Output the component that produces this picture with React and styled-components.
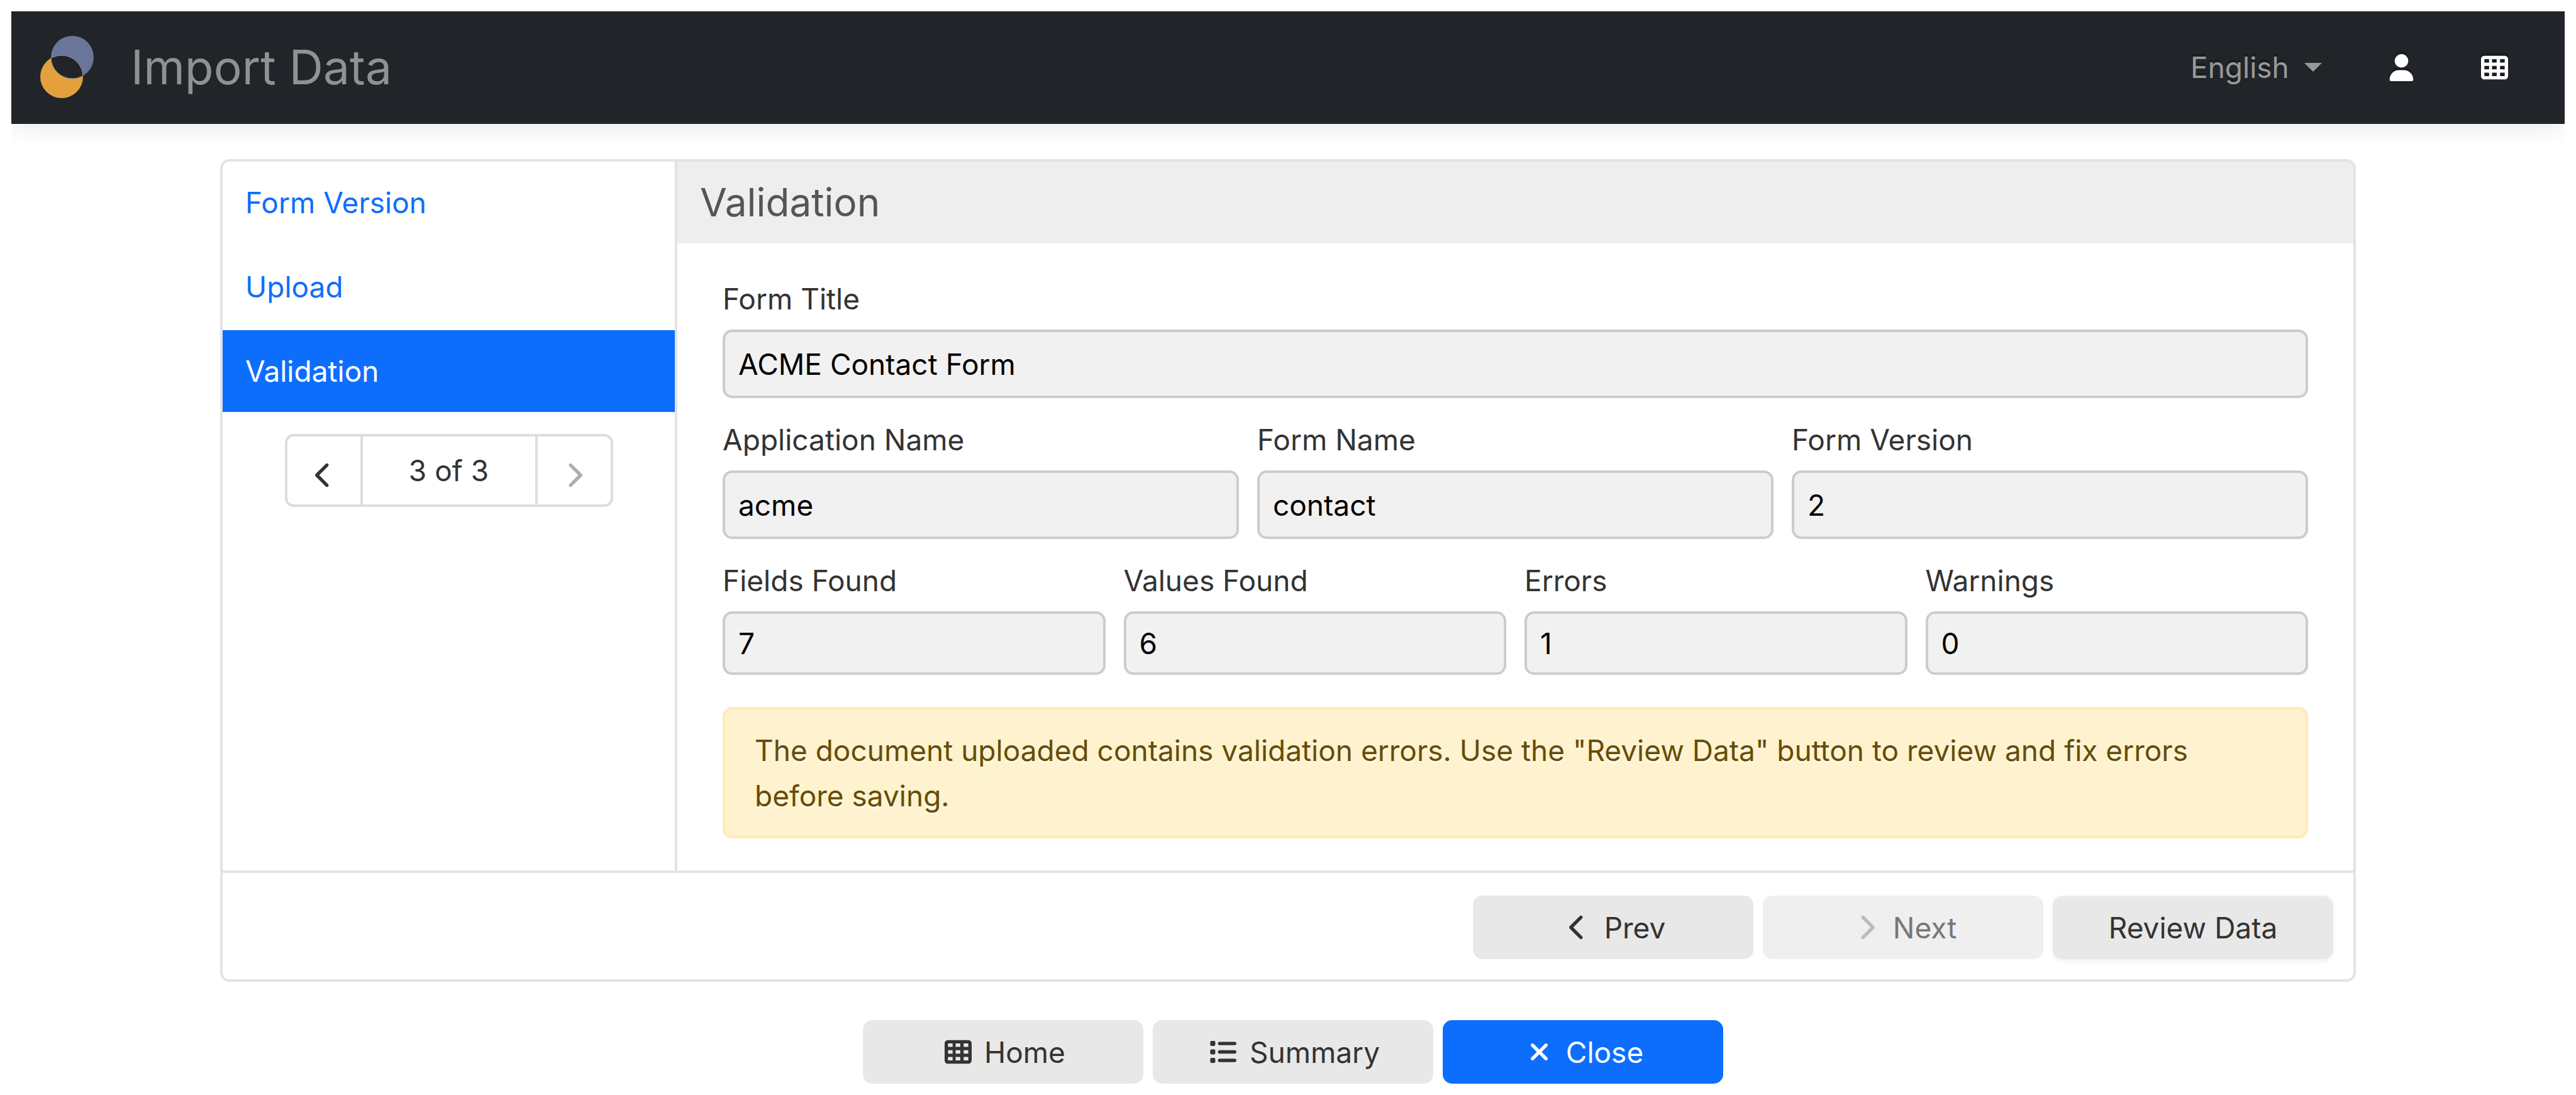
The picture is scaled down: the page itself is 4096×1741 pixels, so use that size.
import React from "react";
import styled, { createGlobalStyle, css } from "styled-components";
import {
  FaChevronLeft,
  FaChevronRight,
  FaList,
  FaTableCells,
  FaUser,
  FaXmark,
} from "react-icons/fa6";

const color = {
  nav: "#212529",
  muted: "#999",
  text: "#333",
  primary: "#0d6efd",
  line: "#e3e3e3",
  button: "#e8e8e8",
};

const GlobalStyle = createGlobalStyle`
  *, *::before, *::after { box-sizing: border-box; }
  body {
    margin: 0;
    background: #fff;
    color: ${color.text};
    font-family: Inter, "Liberation Sans", sans-serif;
    font-size: 46px;
    line-height: 72px;
  }
  button, input, select { font: inherit; }
`;

const Page = styled.div`
  padding: 18px;
`;

const Navbar = styled.header`
  display: flex;
  align-items: center;
  justify-content: space-between;
  height: 179px;
  padding: 0 90px 0 45px;
  background: ${color.nav};
  border-bottom: 1px solid #1a1d20;
  box-shadow: 0 4px 36px rgba(0, 0, 0, 0.1);
  clip-path: inset(0 0 -60px 0);
`;

const Brand = styled.a`
  display: flex;
  align-items: center;
  gap: 57px;
  color: #909193;
  font-size: 75px;
  line-height: 92px;
  text-decoration: none;
`;

const Logo = styled.svg`
  display: block;
  width: 88px;
  height: 102px;
`;

const NavTools = styled.nav`
  display: flex;
  align-items: center;
  text-shadow: 0 -4px 0 rgba(0, 0, 0, 0.25);
`;

const Language = styled.label`
  display: flex;
  align-items: center;
  gap: 24px;
  margin-right: 105px;
  color: ${color.muted};
`;

const LanguageSelect = styled.select`
  appearance: none;
  padding: 0;
  border: 0;
  background: transparent;
  color: inherit;
  text-shadow: inherit;
  line-height: 72px;
`;

const Caret = styled.span`
  border: 14px solid transparent;
  border-top-color: currentColor;
  border-bottom: 0;
`;

const NavButton = styled.button`
  display: flex;
  padding: 0;
  border: 0;
  background: transparent;
  color: #fff;
  font-size: 43px;

  & + & {
    margin-left: 105px;
  }

  svg {
    width: auto;
    height: 43px;
    filter: drop-shadow(0 -4px 0 rgba(0, 0, 0, 0.25));
  }
`;

const Main = styled.main`
  margin-top: 56px;
`;

const Card = styled.section`
  display: grid;
  grid-template-columns: 723px 1fr;
  max-width: 3396px;
  margin: 0 auto;
  border: 4px solid ${color.line};
  border-radius: 15px;
  overflow: hidden;
`;

const Sidebar = styled.aside`
  display: flex;
  flex-direction: column;
  border-right: 4px solid ${color.line};
`;

const Steps = styled.nav`
  display: flex;
  flex-direction: column;
  gap: 4px;
`;

const Step = styled.a`
  padding: 29px 36px;
  color: ${(p) => (p.$active ? "#fff" : color.primary)};
  background: ${(p) => (p.$active ? color.primary : "transparent")};
  text-decoration: none;
`;

const Pager = styled.div`
  display: grid;
  grid-template-columns: 116px 1fr 116px;
  width: 522px;
  height: 116px;
  margin: 35px auto 0;
  border: 4px solid #ddd;
  border-radius: 14px;
`;

const PagerButton = styled.button`
  display: flex;
  align-items: center;
  justify-content: center;
  padding: 14px 0 0;
  border: 0;
  background: transparent;
  color: ${color.text};
  font-size: 43px;

  &:disabled {
    color: #adadad;
  }
`;

const PagerText = styled.span`
  display: flex;
  align-items: center;
  justify-content: center;
  border: solid #ddd;
  border-width: 0 4px;
`;

const Panel = styled.div`
  min-width: 0;
`;

const PanelTitle = styled.h2`
  margin: 0;
  padding: 20px 36px;
  background: #eee;
  color: #555;
  font-size: 62px;
  font-weight: 400;
  line-height: 90px;
`;

const Form = styled.form`
  display: flex;
  flex-direction: column;
  gap: 30px;
  padding: 52px 72px 51px;
`;

const FieldRow = styled.div`
  display: grid;
  grid-template-columns: repeat(${(p) => p.$columns}, 1fr);
  gap: 29px;
`;

const FieldBox = styled.div`
  display: flex;
  flex-direction: column;
  gap: 13px;
  min-width: 0;
`;

const Input = styled.input`
  width: 100%;
  height: ${(p) => (p.$compact ? "101px" : "109px")};
  padding: 0 21px;
  border: 4px solid #ccc;
  border-radius: 15px;
  background: #f1f1f1;
  color: #000;
  outline: 0;
`;

const Alert = styled.p`
  margin: 21px 0 0;
  padding: 29px 47px 28px;
  border: 4px solid #ffeab3;
  border-radius: 15px;
  background: #fff2cf;
  color: #664d03;
  text-shadow: 0 4px 0 rgba(255, 255, 255, 0.5);
`;

const CardFooter = styled.footer`
  grid-column: 1 / -1;
  display: flex;
  justify-content: flex-end;
  gap: 15px;
  padding: 36px 32px 32px;
  border-top: 4px solid ${color.line};
`;

const Actions = styled.div`
  display: flex;
  justify-content: center;
  gap: 15px;
  margin-top: 61px;
  padding-left: 16px;
`;

const Button = styled.button`
  display: flex;
  align-items: center;
  justify-content: center;
  gap: 15px;
  width: 446px;
  height: 101px;
  padding: 0;
  border: 0;
  border-radius: 15px;
  background: ${(p) => (p.$primary ? color.primary : color.button)};
  color: ${(p) => (p.$primary ? "#fff" : color.text)};

  ${(p) =>
    p.$raised &&
    css`
      box-shadow: inset 0 4px 0 rgba(255, 255, 255, 0.2),
        0 4px 7px rgba(0, 0, 0, 0.05);
    `}

  &:disabled {
    background: #efefef;
    color: #777;
  }

  &:disabled svg {
    color: #bbb;
  }
`;

const IconSlot = styled.span`
  display: flex;
  justify-content: center;
  width: 54px;
  font-size: 43px;
`;

function Field({ id, label, value, compact }) {
  return (
    <FieldBox>
      <label htmlFor={id}>{label}</label>
      <Input id={id} type="text" value={value} readOnly $compact={compact} />
    </FieldBox>
  );
}

function IconButton({ icon: Icon, children, ...rest }) {
  return (
    <Button type="button" {...rest}>
      <IconSlot>
        <Icon aria-hidden="true" />
      </IconSlot>
      {children}
    </Button>
  );
}

function BrandLogo() {
  return (
    <Logo viewBox="0 0 88 102" aria-hidden="true">
      <defs>
        <clipPath id="upper">
          <circle cx="52" cy="35" r="34" />
        </clipPath>
        <clipPath id="lower">
          <circle cx="35" cy="66" r="34" />
        </clipPath>
      </defs>
      <circle cx="52" cy="35" r="34" fill="#6a7699" />
      <circle cx="35" cy="66" r="34" fill="#e5a03e" />
      <g clipPath="url(#upper)">
        <circle cx="35" cy="66" r="34" fill={color.nav} stroke="#8a8f9a" strokeWidth="1" />
      </g>
      <g clipPath="url(#lower)">
        <circle cx="52" cy="35" r="34" fill="none" stroke="#8a8f9a" strokeWidth="1" />
      </g>
    </Logo>
  );
}

export default function App() {
  return (
    <>
      <GlobalStyle />
      <Page>
        <Navbar>
          <Brand href="#">
            <BrandLogo />
            Import Data
          </Brand>
          <NavTools>
            <Language>
              <LanguageSelect aria-label="Language" defaultValue="en">
                <option value="en">English</option>
              </LanguageSelect>
              <Caret />
            </Language>
            <NavButton type="button" aria-label="Account">
              <FaUser />
            </NavButton>
            <NavButton type="button" aria-label="Applications">
              <FaTableCells />
            </NavButton>
          </NavTools>
        </Navbar>

        <Main>
          <Card>
            <Sidebar>
              <Steps>
                <Step href="#version">Form Version</Step>
                <Step href="#upload">Upload</Step>
                <Step href="#validation" $active>
                  Validation
                </Step>
              </Steps>
              <Pager>
                <PagerButton type="button" aria-label="Previous step">
                  <FaChevronLeft />
                </PagerButton>
                <PagerText>3 of 3</PagerText>
                <PagerButton type="button" aria-label="Next step" disabled>
                  <FaChevronRight />
                </PagerButton>
              </Pager>
            </Sidebar>

            <Panel>
              <PanelTitle>Validation</PanelTitle>
              <Form>
                <FieldRow $columns={1}>
                  <Field id="title" label="Form Title" value="ACME Contact Form" />
                </FieldRow>
                <FieldRow $columns={3}>
                  <Field id="app" label="Application Name" value="acme" />
                  <Field id="name" label="Form Name" value="contact" />
                  <Field id="version" label="Form Version" value="2" />
                </FieldRow>
                <FieldRow $columns={4}>
                  <Field id="fields" label="Fields Found" value="7" compact />
                  <Field id="values" label="Values Found" value="6" compact />
                  <Field id="errors" label="Errors" value="1" compact />
                  <Field id="warnings" label="Warnings" value="0" compact />
                </FieldRow>
                <Alert role="alert">
                  The document uploaded contains validation errors. Use the "Review Data" button to
                  review and fix errors before saving.
                </Alert>
              </Form>
            </Panel>

            <CardFooter>
              <IconButton icon={FaChevronLeft}>Prev</IconButton>
              <IconButton icon={FaChevronRight} disabled>
                Next
              </IconButton>
              <Button type="button" $raised>
                Review Data
              </Button>
            </CardFooter>
          </Card>

          <Actions>
            <IconButton icon={FaTableCells}>Home</IconButton>
            <IconButton icon={FaList}>Summary</IconButton>
            <IconButton icon={FaXmark} $primary>
              Close
            </IconButton>
          </Actions>
        </Main>
      </Page>
    </>
  );
}
